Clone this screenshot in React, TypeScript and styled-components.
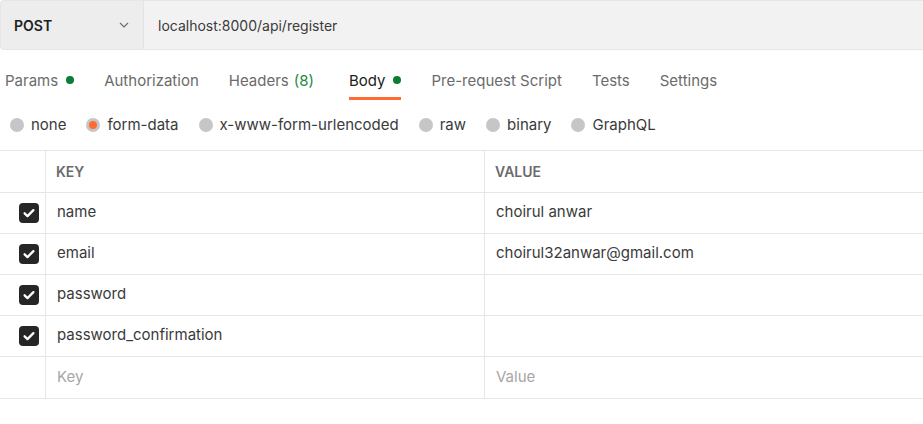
import React from "react";
import styled, { createGlobalStyle } from "styled-components";

const GlobalStyle = createGlobalStyle`
  body {
    margin: 0;
    background: #ffffff;
    font-family: Inter, "Noto Sans", sans-serif;
    color: #212121;
  }
`;

interface Row {
  key: string;
  value: string;
}

const rows: Row[] = [
  { key: "name", value: "choirul anwar" },
  { key: "email", value: "choirul32anwar@gmail.com" },
  { key: "password", value: "" },
  { key: "password_confirmation", value: "" },
];

const tabs = [
  { label: "Params", dot: true },
  { label: "Authorization" },
  { label: "Headers", count: "(8)" },
  { label: "Body", dot: true, active: true },
  { label: "Pre-request Script" },
  { label: "Tests" },
  { label: "Settings" },
];

const bodyTypes = ["none", "form-data", "x-www-form-urlencoded", "raw", "binary", "GraphQL"];

export default function App() {
  return (
    <Page>
      <GlobalStyle />
      <UrlBar>
        <Method>
          <span>POST</span>
          <svg width="12" height="12" viewBox="0 0 12 12">
            <path d="M2 4l4 4 4-4" fill="none" stroke="#6b6b6b" strokeWidth="1.1" />
          </svg>
        </Method>
        <UrlText>localhost:8000/api/register</UrlText>
      </UrlBar>

      <Tabs>
        {tabs.map((t) => (
          <Tab key={t.label} $active={!!t.active}>
            {t.label}
            {t.count && <Count>{t.count}</Count>}
            {t.dot && <Dot />}
          </Tab>
        ))}
      </Tabs>

      <Radios>
        {bodyTypes.map((b) => (
          <RadioItem key={b}>
            <Radio $checked={b === "form-data"} />
            {b}
          </RadioItem>
        ))}
      </Radios>

      <Table>
        <HeadRow>
          <CheckCell />
          <HeadCell>KEY</HeadCell>
          <HeadCell>VALUE</HeadCell>
        </HeadRow>
        {rows.map((r) => (
          <BodyRow key={r.key}>
            <CheckCell>
              <Checkbox>
                <svg width="14" height="14" viewBox="0 0 14 14">
                  <path d="M2.6 7.3l2.9 2.8 5.9-6" fill="none" stroke="#fff" strokeWidth="2.3" strokeLinecap="round" strokeLinejoin="round" />
                </svg>
              </Checkbox>
            </CheckCell>
            <Cell>{r.key}</Cell>
            <Cell>{r.value}</Cell>
          </BodyRow>
        ))}
        <BodyRow $last>
          <CheckCell />
          <Cell $placeholder>Key</Cell>
          <Cell $placeholder>Value</Cell>
        </BodyRow>
      </Table>
    </Page>
  );
}

const Page = styled.div`
  width: 923px;
  height: 424px;
  overflow: hidden;
  background: #fff;
`;

const UrlBar = styled.div`
  display: flex;
  height: 48px;
  background: #f2f2f2;
  border: 1px solid #e6e6e6;
  border-right: none;
  border-radius: 4px 0 0 4px;
`;

const Method = styled.div`
  display: flex;
  align-items: center;
  justify-content: space-between;
  width: 143px;
  box-sizing: border-box;
  padding: 0 13px 0 13px;
  background: #ededed;
  border-right: 1px solid #e3e3e3;
  border-radius: 4px 0 0 4px;
  font-size: 14px;
  font-weight: 600;
  color: #212121;
`;

const UrlText = styled.div`
  display: flex;
  align-items: center;
  padding-left: 14px;
  font-size: 14px;
  color: #3a3a3a;
`;

const Tabs = styled.div`
  display: flex;
  gap: 30px;
  height: 50px;
  padding-left: 5px;
  box-sizing: border-box;
  align-items: stretch;
`;

const Tab = styled.div<{ $active: boolean }>`
  display: flex;
  align-items: center;
  padding-top: 13px;
  font-size: 15px;
  color: ${({ $active }) => ($active ? "#212121" : "#6b6b6b")};
  border-bottom: 3px solid ${({ $active }) => ($active ? "#ff6c37" : "transparent")};
  box-sizing: border-box;
`;

const Count = styled.span`
  color: #1e8a3c;
  margin-left: 5px;
  margin-right: 5px;
`;

const Dot = styled.span`
  width: 8px;
  height: 8px;
  border-radius: 50%;
  background: #0b7d32;
  margin-left: 8px;
`;

const Radios = styled.div`
  display: flex;
  align-items: center;
  gap: 20px;
  height: 50px;
  padding-left: 10px;
  padding-bottom: 1px;
  box-sizing: border-box;
`;

const RadioItem = styled.label`
  display: flex;
  align-items: center;
  gap: 7px;
  font-size: 15px;
  color: #3a3a3a;
`;

const Radio = styled.span<{ $checked: boolean }>`
  width: 14px;
  height: 14px;
  border-radius: 50%;
  background: #c6c6c6;
  box-sizing: border-box;
  display: flex;
  align-items: center;
  justify-content: center;
  &::after {
    content: "";
    display: ${({ $checked }) => ($checked ? "block" : "none")};
    width: 8px;
    height: 8px;
    border-radius: 50%;
    background: #ff6c37;
  }
`;

const Table = styled.div`
  border-top: 1px solid #e6e6e6;
`;

const HeadRow = styled.div`
  display: grid;
  grid-template-columns: 46px 439px 1fr;
  height: 42px;
  border-bottom: 1px solid #e6e6e6;
  box-sizing: border-box;
`;

const BodyRow = styled(HeadRow)<{ $last?: boolean }>`
  height: ${({ $last }) => ($last ? "42px" : "41px")};
`;

const CheckCell = styled.div`
  display: flex;
  align-items: center;
  justify-content: flex-end;
  padding-right: 6px;
  border-right: 1px solid #e6e6e6;
`;

const HeadCell = styled.div`
  display: flex;
  align-items: center;
  padding-left: 10px;
  font-size: 14px;
  font-weight: 600;
  color: #6b6b6b;
  border-right: 1px solid #e6e6e6;
  &:last-child {
    border-right: none;
  }
`;

const Cell = styled.div<{ $placeholder?: boolean }>`
  display: flex;
  align-items: center;
  padding-left: 11px;
  padding-bottom: 3px;
  font-size: 15px;
  color: ${({ $placeholder }) => ($placeholder ? "#a6a6a6" : "#3a3a3a")};
  border-right: 1px solid #e6e6e6;
  &:last-child {
    border-right: none;
  }
`;

const Checkbox = styled.span`
  width: 20px;
  height: 20px;
  border-radius: 4px;
  background: #262626;
  display: flex;
  align-items: center;
  justify-content: center;
`;
